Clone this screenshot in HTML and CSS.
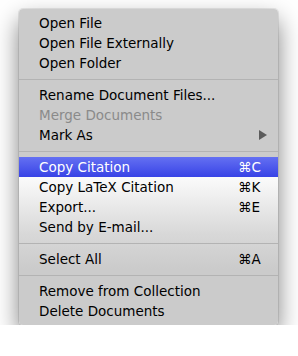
FILE: index.html
```html
<!DOCTYPE html>
<html lang="en">
<head>
  <meta charset="UTF-8" />
  <title>Context Menu</title>
  <link rel="stylesheet" href="styles.css">
</head>
<body>
  <!-- Document context menu -->
  <div class="menu">
    <div class="menu-item">Open File</div>
    <div class="menu-item">Open File Externally</div>
    <div class="menu-item">Open Folder</div>

    <div class="separator"></div>

    <div class="menu-item">Rename Document Files...</div>
    <div class="menu-item disabled">Merge Documents</div>
    <div class="menu-item">Mark As <span class="submenu-arrow"></span></div>

    <div class="separator"></div>

    <div class="menu-item selected">Copy Citation <span class="shortcut">&#8984;C</span></div>
    <div class="menu-item">Copy LaTeX Citation <span class="shortcut">&#8984;K</span></div>
    <div class="menu-item">Export... <span class="shortcut">&#8984;E</span></div>
    <div class="menu-item">Send by E-mail...</div>

    <div class="separator"></div>

    <div class="menu-item">Select All <span class="shortcut">&#8984;A</span></div>

    <div class="separator"></div>

    <div class="menu-item">Remove from Collection</div>
    <div class="menu-item">Delete Documents</div>
  </div>
</body>
</html>
```

FILE: styles.css
```css
body {
  margin: 0;
  padding: 9px 0 0 19px;
  background: white;
  font-family: 'DejaVu Sans', sans-serif;
}

.menu {
  width: 259px;
  padding: 4px 0;
  border-radius: 4px;
  background: linear-gradient(to bottom, #cbcbcb 0, #cbcbcb 150px, #fbfbfb 168px, #d8d8d8 225px, #cbcbcb 260px);
  box-shadow: 0 0 0 1px rgba(0, 0, 0, 0.08), 0 11px 24px rgba(0, 0, 0, 0.5);
}

.menu-item {
  display: flex;
  align-items: center;
  justify-content: space-between;
  height: 20px;
  padding: 0 17px 0 20px;
  font-size: 13.5px;
  color: #000;
}

.menu-item.disabled {
  color: #8a8a8a;
}

.menu-item.selected {
  background: linear-gradient(to bottom, #6470f2, #3843e6);
  color: white;
}

.shortcut {
  width: 23px;
}

.submenu-arrow {
  width: 0;
  height: 0;
  margin-right: -6px;
  border-top: 5px solid transparent;
  border-bottom: 5px solid transparent;
  border-left: 8px solid #5c5c5c;
}

.separator {
  height: 1px;
  margin: 6px 0 5px;
  background: #b3b3b3;
}
```
